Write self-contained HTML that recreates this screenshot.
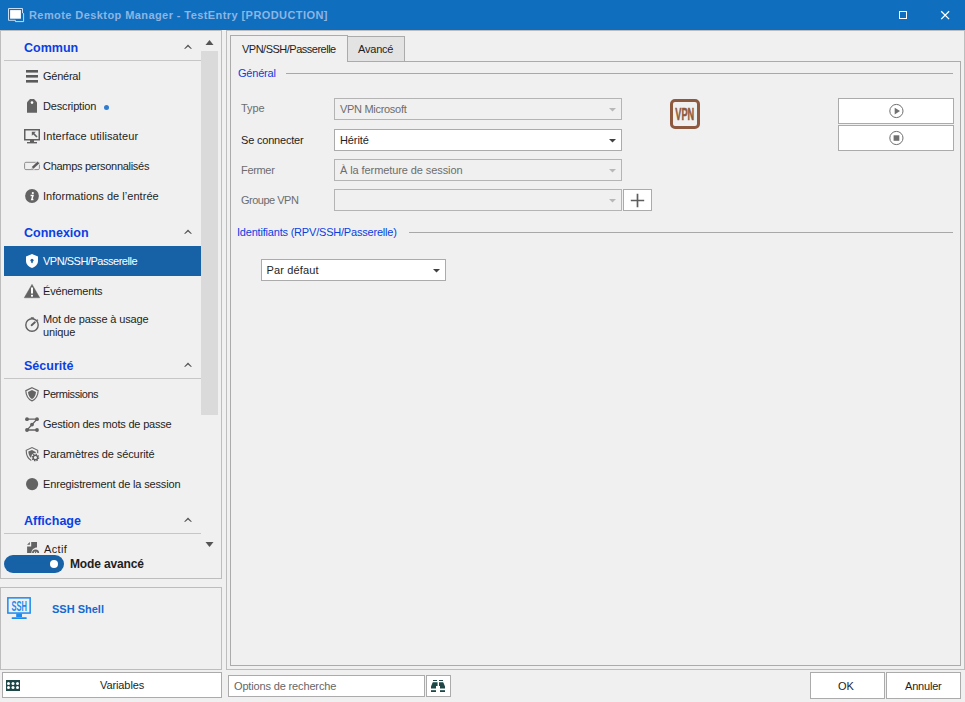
<!DOCTYPE html>
<html><head><meta charset="utf-8">
<style>
*{box-sizing:border-box;margin:0;padding:0}
html,body{width:965px;height:702px;overflow:hidden;background:#F0F0F0;font-family:"Liberation Sans",sans-serif;font-size:11px;color:#1E1E1E}
.a{position:absolute}
.t{position:absolute;white-space:nowrap;line-height:14px;font-size:11px;letter-spacing:-0.1px}
.hdr{font-weight:bold;font-size:12.5px;color:#0A40E2;letter-spacing:0}
.sep{position:absolute;height:1px;background:#C6C6C6;left:4px;width:197px}
.box{position:absolute;border:1px solid #ABABAB;background:#fff}
.dis{background:#F0F0F0;border-color:#B4B4B4}
.gray{color:#6D6D6D}
svg{position:absolute;overflow:visible}
</style></head><body>
<!-- ============ title bar ============ -->
<div class="a" style="left:0;top:0;width:965px;height:30px;background:#106EBE"></div>
<svg style="left:8px;top:8px" width="17" height="15"><rect x="2.1" y="2.1" width="10.8" height="8.6" fill="#fff"/><path d="M0.5 0.5H14.5V5L15.6 5.5V13.6H7.4V12.3H0.5Z" fill="none" stroke="#C8DCF2" stroke-width="1" stroke-linejoin="round"/></svg>
<div class="t" style="left:29px;top:8px;font-size:11px;font-weight:bold;color:#8DB5E3;letter-spacing:0.42px">Remote Desktop Manager - TestEntry [PRODUCTION]</div>
<div class="a" style="left:899px;top:11px;width:8px;height:8px;border:1px solid #fff"></div>
<svg style="left:941px;top:11px" width="9" height="9"><path d="M0.2 0.2L8.1 8.1M8.1 0.2L0.2 8.1" stroke="#fff" stroke-width="1.3"/></svg>

<!-- ============ left nav panel ============ -->
<div class="a" style="left:0;top:30px;width:222px;height:549px;border:1px solid #BDBDBD"></div>
<!-- scrollbar -->
<svg style="left:205px;top:40px" width="9" height="6"><path d="M4.5 0L8.5 5H0.5Z" fill="#555"/></svg>
<div class="a" style="left:201px;top:51px;width:17px;height:364px;background:#DADADA"></div>
<svg style="left:205px;top:542px" width="9" height="6"><path d="M0.5 0H8.5L4.5 5Z" fill="#555"/></svg>

<!-- Commun -->
<div class="t hdr" style="left:24px;top:41px">Commun</div>
<svg style="left:184px;top:44px" width="9" height="6"><path d="M0 4.7L4 0.6L8 4.7H6.6L4 2.5L1.4 4.7Z" fill="#555"/></svg>
<div class="sep" style="top:60px"></div>

<svg style="left:26px;top:70px" width="12" height="13"><rect x="0" y="0" width="12" height="2.6" fill="#5A5A5A"/><rect x="0" y="5" width="12" height="2.6" fill="#5A5A5A"/><rect x="0" y="10" width="12" height="2.6" fill="#5A5A5A"/></svg>
<div class="t" style="letter-spacing:-0.24px;left:43px;top:69px">Général</div>

<svg style="left:27px;top:99px" width="10" height="14"><path d="M3 0H7L10 3.2V13.7H0V3.2Z" fill="#636363"/><circle cx="5" cy="3.6" r="1.3" fill="#fff"/></svg>
<div class="t" style="letter-spacing:-0.17px;left:43px;top:99px">Description</div>
<div class="a" style="left:104px;top:104.7px;width:5px;height:5px;border-radius:50%;background:#2E7DD0"></div>

<svg style="left:24px;top:129px" width="16" height="15"><rect x="0.75" y="0.75" width="14.5" height="10" fill="none" stroke="#606060" stroke-width="1.5"/><rect x="6" y="10.5" width="4" height="2.6" fill="#606060"/><rect x="3" y="13" width="10" height="1.4" fill="#606060"/><path d="M8.6 3.6L13 8" stroke="#606060" stroke-width="1.6"/><path d="M7.8 2.8H11.8L7.8 6.8Z" fill="#606060"/></svg>
<div class="t" style="letter-spacing:0.11px;left:43px;top:129px">Interface utilisateur</div>

<svg style="left:24px;top:161px" width="16" height="10"><rect x="0.6" y="1.3" width="14.8" height="7.3" rx="1.3" fill="none" stroke="#8E8E8E" stroke-width="1"/><path d="M8.4 7.6L14.6 1.4" stroke="#F0F0F0" stroke-width="4.2"/><path d="M8.6 6.9L14.4 1.5" stroke="#5C5C5C" stroke-width="2.4"/><path d="M8.6 6.9L7.6 8.4" stroke="#B8B8B8" stroke-width="1.2"/></svg>
<div class="t" style="letter-spacing:-0.29px;left:43px;top:159px">Champs personnalisés</div>

<svg style="left:25px;top:189px" width="14" height="14"><circle cx="7" cy="7" r="6.9" fill="#636363"/><circle cx="7.8" cy="4.1" r="1.1" fill="#fff"/><path d="M5.6 6.4H8L6.8 10.4H8.4" fill="none" stroke="#fff" stroke-width="1.5"/></svg>
<div class="t" style="letter-spacing:0.03px;left:43px;top:189px">Informations de l’entrée</div>

<!-- Connexion -->
<div class="t hdr" style="left:24px;top:226px">Connexion</div>
<svg style="left:184px;top:229px" width="9" height="6"><path d="M0 4.7L4 0.6L8 4.7H6.6L4 2.5L1.4 4.7Z" fill="#555"/></svg>
<div class="a" style="left:4px;top:246px;width:197px;height:30px;background:#1761A7"></div>
<svg style="left:26px;top:254px" width="12" height="14"><path d="M6 0L12 2.6V7C12 10.5 9 13 6 14C3 13 0 10.5 0 7V2.6Z" fill="#fff"/><circle cx="6" cy="6.2" r="1.5" fill="#1761A7"/><rect x="5.3" y="6.5" width="1.4" height="2.6" fill="#1761A7"/></svg>
<div class="t" style="left:43px;top:254px;color:#fff;letter-spacing:-0.48px">VPN/SSH/Passerelle</div>

<svg style="left:24px;top:284px" width="16" height="14"><path d="M8 0.3L15.8 13.8H0.2Z" fill="#636363" stroke="#636363" stroke-width="0.4" stroke-linejoin="round"/><rect x="7" y="3.5" width="2" height="6" fill="#fff"/><rect x="7" y="10.8" width="2" height="1.8" fill="#fff"/></svg>
<div class="t" style="letter-spacing:-0.18px;left:43px;top:284px">Événements</div>

<svg style="left:25px;top:317px" width="14" height="15"><circle cx="7" cy="8" r="6.2" fill="none" stroke="#606060" stroke-width="1.4"/><path d="M5.8 0.8H8.2V2" stroke="#606060" stroke-width="1.2" fill="none"/><path d="M12 2.6L13 3.6" stroke="#606060" stroke-width="1.2"/><path d="M6.6 8.2L9.9 5.3" stroke="#606060" stroke-width="1.9" stroke-linecap="round"/></svg>
<div class="t" style="letter-spacing:-0.14px;left:43px;top:313px;line-height:13px">Mot de passe à usage<br>unique</div>

<!-- Sécurité -->
<div class="t hdr" style="left:24px;top:359px">Sécurité</div>
<svg style="left:184px;top:362px" width="9" height="6"><path d="M0 4.7L4 0.6L8 4.7H6.6L4 2.5L1.4 4.7Z" fill="#555"/></svg>
<div class="sep" style="top:378px"></div>

<svg style="left:25px;top:387px" width="14" height="15"><path d="M7 0.7L13.2 3.6C13 8.5 10.5 12.5 7 13.9C3.5 12.5 1 8.5 0.8 3.6Z" fill="none" stroke="#686868" stroke-width="1.2"/><path d="M7 3L11 4.9C10.8 8.3 9.3 10.8 7 12C4.7 10.8 3.2 8.3 3 4.9Z" fill="#636363"/></svg>
<div class="t" style="letter-spacing:-0.43px;left:43px;top:387px">Permissions</div>

<svg style="left:25px;top:417px" width="14" height="15"><path d="M2 2.2H12L2 13H12" fill="none" stroke="#606060" stroke-width="1.3"/><circle cx="2" cy="2.2" r="1.9" fill="#606060"/><circle cx="12" cy="2.2" r="1.9" fill="#606060"/><circle cx="2" cy="13" r="1.9" fill="#606060"/><circle cx="12" cy="13" r="1.9" fill="#606060"/><circle cx="7" cy="7.6" r="1.9" fill="#606060"/></svg>
<div class="t" style="letter-spacing:-0.19px;left:43px;top:417px">Gestion des mots de passe</div>

<svg style="left:25px;top:447px" width="15" height="15"><path d="M12.7 6.3V3.3L7 0.6L1.2 3.3C1.2 8 3 11.8 6.3 13.6" fill="none" stroke="#6A6A6A" stroke-width="1.15"/><path d="M7 3L11.2 5.2L8.2 7.6L5.6 10.8C4.2 9 3.4 7 3.3 4.6Z" fill="#666"/><circle cx="10.4" cy="10.5" r="4.4" fill="#F0F0F0"/><circle cx="10.4" cy="10.5" r="3.1" fill="none" stroke="#5C5C5C" stroke-width="1.6" stroke-dasharray="1.3 1.1"/><circle cx="10.4" cy="10.5" r="2.2" fill="none" stroke="#5C5C5C" stroke-width="1.3"/></svg>
<div class="t" style="left:43px;top:447px">Paramètres de sécurité</div>

<svg style="left:26px;top:478px" width="12" height="12"><circle cx="6.1" cy="6.1" r="6.1" fill="#636363"/></svg>
<div class="t" style="letter-spacing:-0.16px;left:43px;top:477px">Enregistrement de la session</div>

<!-- Affichage -->
<div class="t hdr" style="left:24px;top:514px">Affichage</div>
<svg style="left:184px;top:517px" width="9" height="6"><path d="M0 4.7L4 0.6L8 4.7H6.6L4 2.5L1.4 4.7Z" fill="#555"/></svg>
<div class="sep" style="top:533px"></div>
<div class="a" style="left:1px;top:540px;width:199px;height:14px;overflow:hidden">
  <svg style="left:26px;top:2px" width="14" height="12"><path d="M0 2.8L2.9 -0.1V2.8Z" fill="#636363"/><path d="M4.2 0.1H10V5.6C7 5.6 4.6 8 4.4 11H0.1V4.4H4.2Z" fill="#636363"/><path d="M5.9 11A2.7 2.7 0 0 1 11.3 11" fill="none" stroke="#636363" stroke-width="1.7"/><path d="M8.3 11L9.4 8.6" stroke="#636363" stroke-width="1.2"/></svg>
  <div class="t" style="left:43px;top:2px;letter-spacing:0.35px">Actif</div>
</div>

<!-- toggle -->
<div class="a" style="left:4px;top:555px;width:60px;height:18px;border-radius:9px;background:#1761A7"></div>
<div class="a" style="left:50px;top:560px;width:8.4px;height:8.4px;border-radius:50%;background:#fff"></div>
<div class="t" style="left:70px;top:557px;font-size:12px;font-weight:bold;color:#1E1E1E;letter-spacing:-0.15px">Mode avancé</div>

<!-- ============ SSH panel ============ -->
<div class="a" style="left:0;top:587px;width:222px;height:83px;border:1px solid #BDBDBD"></div>
<svg style="left:7px;top:597px" width="25" height="23"><rect x="0.85" y="0.85" width="22.3" height="15.2" fill="none" stroke="#1C89EE" stroke-width="1.5"/><rect x="9.2" y="16.6" width="5.8" height="3.4" fill="#1C89EE"/><rect x="4.6" y="20.2" width="15.2" height="1.8" rx="0.8" fill="#1C89EE"/><text x="4.6" y="13.8" textLength="15.4" lengthAdjust="spacingAndGlyphs" font-family="Liberation Sans" font-weight="bold" font-size="14" fill="#1C89EE">SSH</text></svg>
<div class="t" style="left:52px;top:602px;font-size:11px;font-weight:bold;color:#1569D0;letter-spacing:0px">SSH Shell</div>

<!-- Variables button -->
<div class="box" style="left:2px;top:672px;width:220px;height:26px"></div>
<svg style="left:6px;top:680px" width="14" height="11"><rect x="0" y="0" width="14" height="11" fill="#1E4747"/><g fill="#fff"><circle cx="2.5" cy="3.6" r="1.5"/><circle cx="7" cy="3.6" r="1.5"/><circle cx="11.5" cy="3.6" r="1.5"/><circle cx="2.5" cy="7.5" r="1.5"/><circle cx="7" cy="7.5" r="1.5"/><circle cx="11.5" cy="7.5" r="1.5"/></g></svg>
<div class="t" style="left:100px;top:678px">Variables</div>

<!-- ============ right panel ============ -->
<div class="a" style="left:226px;top:30px;width:739px;height:640px;border:1px solid #BDBDBD"></div>
<!-- tab page -->
<div class="a" style="left:230px;top:61px;width:731px;height:605px;border:1px solid #ABABAB"></div>
<!-- inactive tab -->
<div class="a" style="left:347px;top:36px;width:58px;height:26px;border:1px solid #ABABAB;background:#E3E3E3"></div>
<!-- active tab -->
<div class="a" style="left:230px;top:35px;width:118px;height:27px;border:1px solid #ABABAB;border-bottom:none;background:#F0F0F0"></div>
<div class="t" style="left:242px;top:42px;letter-spacing:-0.5px">VPN/SSH/Passerelle</div>
<div class="t" style="left:358px;top:42px;letter-spacing:-0.2px">Avancé</div>

<!-- Général group -->
<div class="t" style="left:238px;top:66px;color:#0B3EE2;letter-spacing:-0.2px">Général</div>
<div class="a" style="left:286px;top:73px;width:667px;height:1px;background:#A8A8A8"></div>

<div class="t gray" style="left:241px;top:101px">Type</div>
<div class="box dis" style="left:334px;top:98px;width:288px;height:22px"></div>
<div class="t gray" style="left:340px;top:102px;letter-spacing:-0.3px">VPN Microsoft</div>
<svg style="left:609px;top:108px" width="8" height="4"><path d="M0 0H7L3.5 3.5Z" fill="#B8B8B8"/></svg>

<div class="t" style="left:241px;top:133px;letter-spacing:-0.2px">Se connecter</div>
<div class="box" style="left:334px;top:129px;width:288px;height:22px"></div>
<div class="t" style="left:340px;top:133px">Hérité</div>
<svg style="left:609px;top:139px" width="8" height="4"><path d="M0 0H7L3.5 3.5Z" fill="#404040"/></svg>

<div class="t gray" style="left:241px;top:163px;letter-spacing:-0.33px">Fermer</div>
<div class="box dis" style="left:334px;top:159px;width:288px;height:22px"></div>
<div class="t gray" style="left:340px;top:163px;letter-spacing:-0.09px">À la fermeture de session</div>
<svg style="left:609px;top:169px" width="8" height="4"><path d="M0 0H7L3.5 3.5Z" fill="#B8B8B8"/></svg>

<div class="t gray" style="left:241px;top:193px;letter-spacing:-0.5px">Groupe VPN</div>
<div class="box dis" style="left:334px;top:189px;width:288px;height:22px"></div>
<svg style="left:609px;top:199px" width="8" height="4"><path d="M0 0H7L3.5 3.5Z" fill="#B8B8B8"/></svg>
<div class="box" style="left:623px;top:189px;width:29px;height:22px"></div>
<svg style="left:630px;top:193px" width="15" height="15"><path d="M7.5 0.8V14.2M0.8 7.5H14.2" stroke="#5E5E5E" stroke-width="1.7"/></svg>

<!-- VPN icon -->
<div class="a" style="left:670px;top:99px;width:30px;height:30px;border:3px solid #8E5A3F;border-radius:5px;background:#F0F0F0"></div>
<svg style="left:670px;top:99px" width="30" height="30"><text x="5.3" y="21" textLength="19" lengthAdjust="spacingAndGlyphs" font-family="Liberation Sans" font-weight="bold" font-size="16.4" fill="#8E5A3F" stroke="#8E5A3F" stroke-width="0.5">VPN</text></svg>

<!-- play / stop buttons -->
<div class="box" style="left:838px;top:98px;width:116px;height:26px"></div>
<svg style="left:888.5px;top:104px" width="15" height="15"><circle cx="7.4" cy="7" r="6.6" fill="none" stroke="#707070" stroke-width="1"/><path d="M5.7 3.7L11 7L5.7 10.5Z" fill="#707070"/></svg>
<div class="box" style="left:838px;top:125px;width:116px;height:26px"></div>
<svg style="left:888.5px;top:131px" width="15" height="15"><circle cx="7.4" cy="7" r="6.6" fill="none" stroke="#707070" stroke-width="1"/><rect x="4.6" y="4.3" width="5.7" height="5.5" fill="#707070"/></svg>

<!-- Identifiants group -->
<div class="t" style="left:237px;top:225px;color:#0B3EE2;letter-spacing:-0.2px">Identifiants (RPV/SSH/Passerelle)</div>
<div class="a" style="left:409px;top:232px;width:544px;height:1px;background:#A8A8A8"></div>
<div class="box" style="left:261px;top:259px;width:185px;height:22px"></div>
<div class="t" style="left:266.5px;top:263px;letter-spacing:0.15px">Par défaut</div>
<svg style="left:433px;top:269px" width="8" height="4"><path d="M0 0H7L3.5 3.5Z" fill="#404040"/></svg>

<!-- ============ bottom bar ============ -->
<div class="box" style="left:228px;top:675px;width:197px;height:22px"></div>
<div class="t gray" style="left:234px;top:679px;letter-spacing:-0.15px;color:#666">Options de recherche</div>
<div class="box" style="left:426px;top:675px;width:25px;height:22px"></div>
<svg style="left:430px;top:679px" width="16" height="14"><g fill="#1E4848"><rect x="3" y="1" width="4" height="1"/><rect x="9" y="1" width="4" height="1"/><path d="M2.8 3.2H7.6V7H6V9.6H1V7.6L2 5Z"/><path d="M9 3.2H13.2L14 5L15 7.6V9.6H10V7H9Z"/><rect x="1" y="11.2" width="5" height="1.8"/><rect x="10" y="11.2" width="5" height="1.8"/></g></svg>

<div class="box" style="left:810px;top:672px;width:75px;height:27px"></div>
<div class="t" style="left:838px;top:679px">OK</div>
<div class="box" style="left:886px;top:672px;width:75px;height:27px"></div>
<div class="t" style="left:905px;top:679px;letter-spacing:-0.2px">Annuler</div>
</body></html>
